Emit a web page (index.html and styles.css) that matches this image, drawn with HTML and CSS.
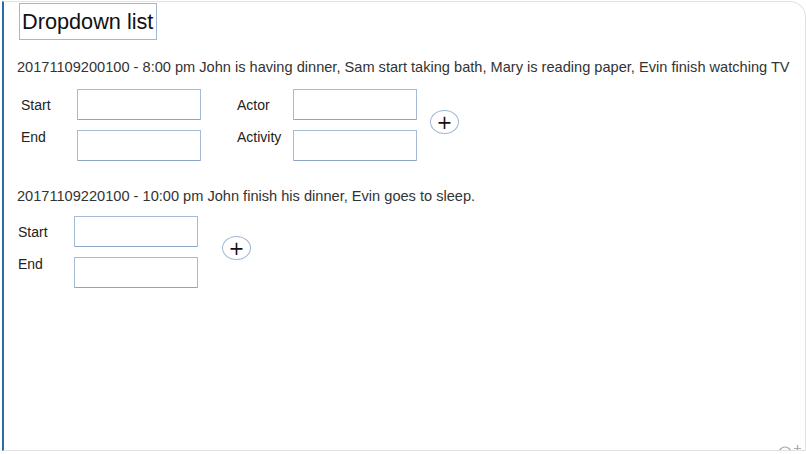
FILE: index.html
```html
<!DOCTYPE html>
<html>
<head>
<meta charset="utf-8">
<link rel="stylesheet" href="styles.css">
</head>
<body>
<div class="frame">
  <div class="title">Dropdown list</div>
  <p class="event event-first">20171109200100 - 8:00 pm John is having dinner, Sam start taking bath, Mary is reading paper, Evin finish watching TV</p>
  <div class="form form-first">
    <div class="grid grid-wide">
      <span class="label mid">Start</span>
      <input class="field" type="text">
      <span class="label mid">Actor</span>
      <input class="field" type="text">
      <span class="label top">End</span>
      <input class="field" type="text">
      <span class="label top">Activity</span>
      <input class="field" type="text">
    </div>
    <button class="add add-first">+</button>
  </div>
  <p class="event event-second">20171109220100 - 10:00 pm John finish his dinner, Evin goes to sleep.</p>
  <div class="form form-second">
    <div class="grid grid-narrow">
      <span class="label mid">Start</span>
      <input class="field" type="text">
      <span class="label top">End</span>
      <input class="field" type="text">
    </div>
    <button class="add add-second">+</button>
  </div>
  <svg class="feedback" width="28" height="14" viewBox="0 0 28 14">
    <circle cx="8" cy="10" r="6" fill="none" stroke="#aaa" stroke-width="1.2"/>
    <circle cx="6" cy="8.5" r="0.9" fill="#aaa"/>
    <circle cx="10" cy="8.5" r="0.9" fill="#aaa"/>
    <path d="M17 5.5h7M20.5 2v7" stroke="#aaa" stroke-width="1.2" fill="none"/>
  </svg>
</div>
</body>
</html>
```
FILE: styles.css
```css
html, body {
  margin: 0;
  padding: 0;
  background: #fff;
}
body {
  font-family: "Liberation Sans", Arial, sans-serif;
  color: #222;
}
.frame {
  position: relative;
  box-sizing: border-box;
  margin: 1px 0 0 2px;
  width: 804px;
  height: 450px;
  border-top: 1px solid #e2e2e2;
  border-right: 1px solid #e2e2e2;
  border-bottom: 1px solid #e2e2e2;
  border-left: 2px solid #2e6aa6;
  border-top-right-radius: 16px;
  padding: 1px 0 0 15px;
  overflow: hidden;
}
.title {
  display: inline-block;
  box-sizing: border-box;
  height: 37px;
  line-height: 35px;
  padding: 0 3px 0 2px;
  border: 1px solid #9fb6d4;
  font-size: 21.7px;
  color: #111;
}
.event {
  margin: 0;
  font-size: 14.6px;
  line-height: 16px;
  color: #333;
  margin-left: -2px;
}
.event-first {
  margin-top: 19px;
}
.event-second {
  margin-top: 27px;
}
.form {
  display: flex;
  align-items: center;
}
.form-first {
  margin-top: 14px;
  margin-left: 2px;
}
.form-second {
  margin-top: 12px;
  margin-left: -1px;
}
.grid {
  display: grid;
  row-gap: 10px;
  align-items: start;
}
.grid-wide {
  grid-template-columns: 56px 160px 56px 124px;
}
.grid-narrow {
  grid-template-columns: 56px 124px;
}
.label {
  font-size: 14px;
  line-height: 16px;
  color: #222;
}
.label.mid {
  align-self: center;
}
.label.top {
  align-self: start;
  margin-top: -1px;
}
.field {
  box-sizing: border-box;
  width: 124px;
  height: 31px;
  margin: 0;
  padding: 0 4px;
  border: 1px solid #a6bad6;
  border-bottom-color: #8ea6c6;
  border-radius: 1px;
  background: #fff;
  font-family: inherit;
  font-size: 14px;
  outline: none;
}
.add {
  box-sizing: border-box;
  width: 29px;
  height: 24px;
  padding: 0;
  border: 1px solid #9fb6d4;
  border-radius: 50%;
  background: #fff;
  color: #111;
  font-family: "DejaVu Sans", sans-serif;
  font-size: 19px;
  line-height: 20px;
  text-align: center;
}
.add-first {
  margin-left: 13px;
  margin-bottom: 6px;
}
.add-second {
  margin-left: 24px;
  margin-bottom: 8px;
}
.feedback {
  position: absolute;
  right: 0;
  bottom: -7px;
  background: #fff;
}
```
